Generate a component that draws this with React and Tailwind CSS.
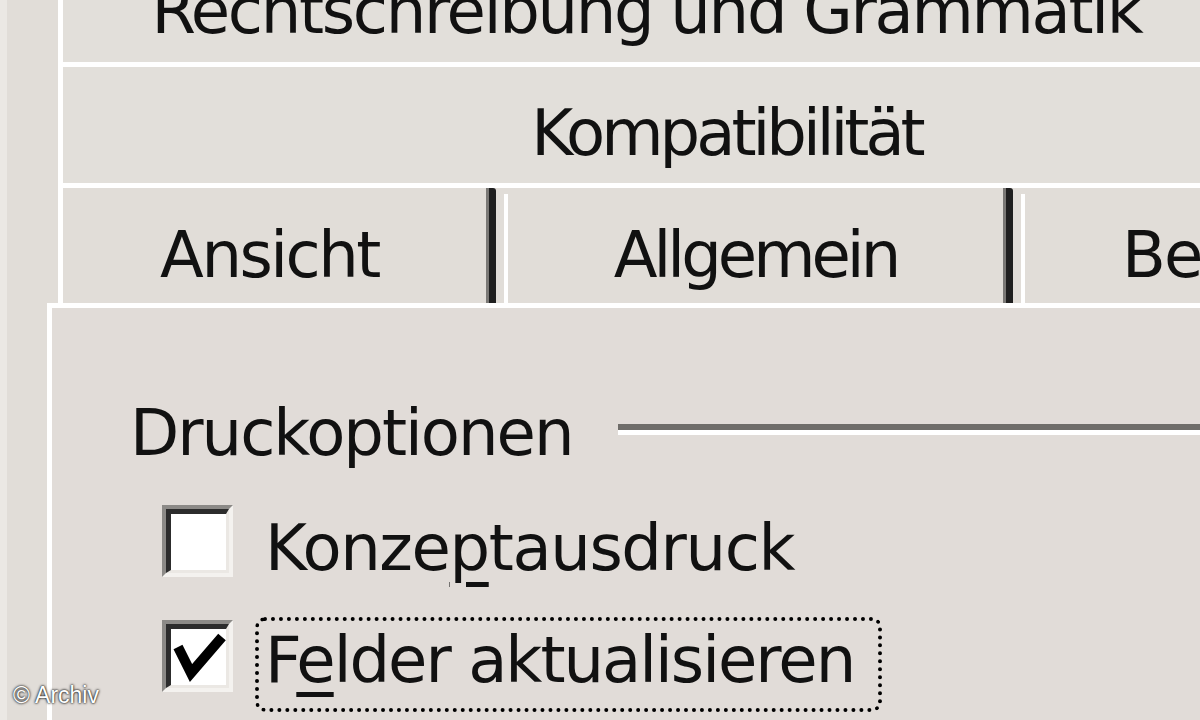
import React from 'react'

const font = "font-['DejaVu_Sans',sans-serif]"

function Checkbox({ checked }) {
  return (
    <div className="w-[71px] h-[72px] shrink-0 border-t-[4px] border-l-[4px] border-r-[4px] border-b-[4px] border-t-[#8c8a87] border-l-[#8c8a87] border-r-[#f4f2ef] border-b-[#f4f2ef]">
      <div className="relative w-full h-full bg-white border-t-[5px] border-l-[5px] border-r-[3px] border-b-[3px] border-t-[#2c2c2c] border-l-[#2c2c2c] border-r-[#ebe8e4] border-b-[#ebe8e4]">
        {checked && (
          <svg className="absolute inset-0 w-full h-full" viewBox="0 0 55 56">
            <polyline points="7,18 20,44 51,8" fill="none" stroke="#000" strokeWidth="10" strokeLinejoin="miter" />
          </svg>
        )}
      </div>
    </div>
  )
}

function TabEdge() {
  return (
    <div className="flex shrink-0">
      <div className="w-[3px] bg-[#7a7875]" />
      <div className="w-[7px] bg-[#1f1f1f] rounded-tr-[3px]" />
      <div className="w-[8px]" />
      <div className="w-[4px] bg-white mt-[6px]" />
    </div>
  )
}

export default function App() {
  return (
    <div className={`relative w-[1200px] h-[720px] overflow-hidden bg-[#e1ddd8] text-[#111] text-[64px] leading-none ${font}`}>
      {/* tab rows */}
      <div className="flex h-[303px]">
        <div className="w-[7px] shrink-0 bg-[#ebe8e4]" />
        <div className="w-[51px] shrink-0" />
        <div className="w-[5px] shrink-0 bg-white" />
        <div className="flex-1 min-w-0 overflow-hidden flex flex-col">
          <div className="h-[62px] shrink-0 bg-[#e2dfda]">
            <div className="ml-[87px] mt-[-21px] w-[993px] text-center whitespace-nowrap tracking-[-2.3px]">
              Rechtschreibung und Grammatik
            </div>
          </div>
          <div className="h-[121px] shrink-0 border-t-[5px] border-white bg-[#e2dfda] pt-[34px]">
            <div className="ml-[457px] w-[413px] text-center whitespace-nowrap tracking-[-4px]">
              Kompatibilität
            </div>
          </div>
          <div className="h-[120px] shrink-0 border-t-[5px] border-white flex bg-[#e1ddd8]">
            <div className="w-[423px] shrink-0 pt-[35px] text-center whitespace-nowrap tracking-[-2.5px] pr-[10px]">
              Ansicht
            </div>
            <TabEdge />
            <div className="w-[495px] shrink-0 pt-[35px] text-center whitespace-nowrap tracking-[-4px]">
              Allgemein
            </div>
            <TabEdge />
            <div className="flex-1 min-w-0 overflow-hidden pt-[35px] pl-[97px] whitespace-nowrap tracking-[-2px]">
              Bearbeiten
            </div>
          </div>
        </div>
      </div>

      {/* panel */}
      <div className="flex h-[417px]">
        <div className="w-[7px] shrink-0 bg-[#ebe8e4]" />
        <div className="w-[40px] shrink-0" />
        <div className="flex-1 min-w-0 border-l-[5px] border-t-[5px] border-white bg-[#e1dcd8] pt-[93px] pl-[78px]">
          <div className="flex items-start">
            <div className="w-[488px] shrink-0 whitespace-nowrap tracking-[-2px]">Druckoptionen</div>
            <div className="flex-1 mt-[23px] flex flex-col">
              <div className="h-[6px] bg-[#6f6d6a]" />
              <div className="h-[5px] bg-white" />
            </div>
          </div>

          <div className="flex items-start mt-[40px] ml-[32px] gap-[32px]">
            <Checkbox />
            <div className="mt-[11px] whitespace-nowrap tracking-[-1.4px]">
              Konze<span className="underline decoration-5 underline-offset-[12px]">p</span>tausdruck
            </div>
          </div>

          <div className="flex items-start mt-[37px] ml-[32px] gap-[22px]">
            <div className="mt-[3px]">
              <Checkbox checked />
            </div>
            <div className="w-[627px] h-[95px] shrink-0 border-4 border-dotted border-black rounded-[10px] pt-[7px] pl-[6px] whitespace-nowrap tracking-[-2px]">
              F<span className="underline decoration-5 underline-offset-[10px]">e</span>lder aktualisieren
            </div>
          </div>
        </div>
      </div>

      {/* watermark */}
      <div className="absolute left-[13px] top-[684px] text-[23px] leading-none text-white font-['Liberation_Sans',sans-serif] [text-shadow:0_0_2px_#000,0_0_3px_#333]">
        © Archiv
      </div>
    </div>
  )
}
